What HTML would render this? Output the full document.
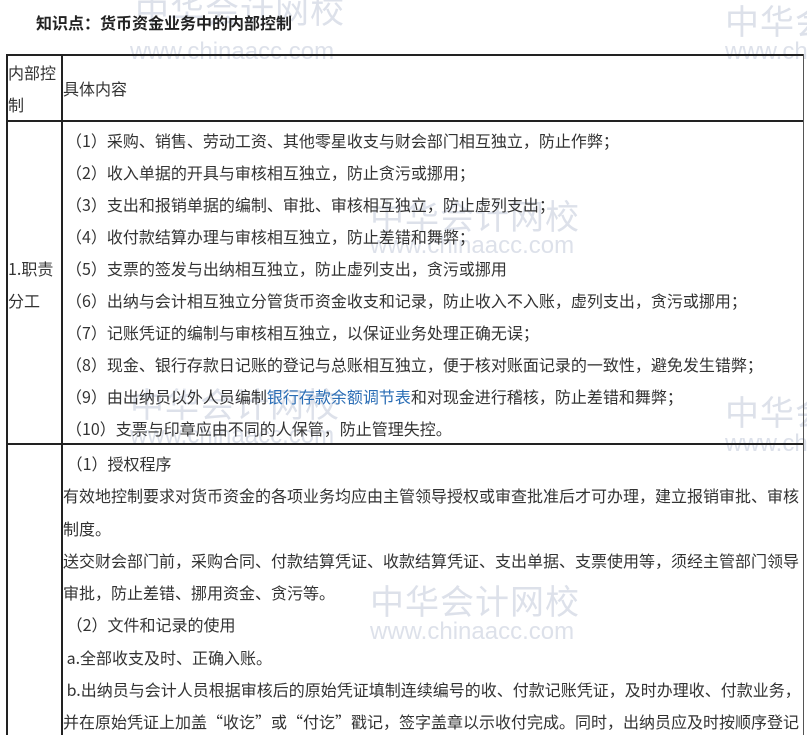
<!DOCTYPE html>
<html><head><meta charset="utf-8"><style>
html,body{margin:0;width:807px;height:735px;overflow:hidden}
body{background:#fff;font-family:"Noto Sans CJK SC","Liberation Sans",sans-serif;color:#333;position:relative}
.t{position:absolute;left:36px;top:10px;font-size:16px;font-weight:bold;color:#222;z-index:3}
.wm{position:absolute;color:#dde1ea;font-size:34px;line-height:34px;white-space:nowrap;letter-spacing:1px;z-index:0;font-family:"Noto Sans CJK SC",sans-serif}
.ww{position:absolute;color:#dde1ea;font-size:24px;line-height:24px;white-space:nowrap;z-index:0;font-family:"Liberation Sans",sans-serif}
.ln{position:absolute;background:#222}
.tx{position:absolute;font-size:16px;line-height:32px;white-space:nowrap;z-index:2}
a{color:#2a6db5;text-decoration:none}
</style></head><body>
<div class="wm" style="left:135px;top:-8px">中华会计网校</div><div class="ww" style="left:130px;top:40px">www.chinaacc.com</div>
<div class="wm" style="left:725px;top:3px">中华会计</div><div class="ww" style="left:725px;top:40px">www.chinaacc.com</div>
<div class="wm" style="left:370px;top:198px">中华会计网校</div><div class="ww" style="left:370px;top:234px">www.chinaacc.com</div>
<div class="wm" style="left:130px;top:386px">中华会计网校</div><div class="ww" style="left:130px;top:424px">www.chinaacc.com</div>
<div class="wm" style="left:725px;top:394px">中华会计</div><div class="ww" style="left:725px;top:432px">www.chinaacc.com</div>
<div class="wm" style="left:370px;top:583px">中华会计网校</div><div class="ww" style="left:370px;top:620px">www.chinaacc.com</div>
<div class="t">知识点：货币资金业务中的内部控制</div>
<div class="ln" style="left:6px;top:54px;width:798px;height:2px"></div>
<div class="ln" style="left:6px;top:120px;width:798px;height:2px"></div>
<div class="ln" style="left:6px;top:443px;width:798px;height:2px"></div>
<div class="ln" style="left:6px;top:54px;width:2px;height:681px"></div>
<div class="ln" style="left:61px;top:54px;width:2px;height:681px"></div>
<div class="ln" style="left:803px;top:54px;width:1px;height:681px;background:#555"></div>
<div class="tx" style="left:8px;top:56px">内部控</div>
<div class="tx" style="left:8px;top:88px">制</div>
<div class="tx" style="left:63px;top:72px">具体内容</div>
<div class="tx" style="left:8px;top:252px">1.职责</div>
<div class="tx" style="left:8px;top:284px">分工</div>
<div class="tx" style="left:66px;top:124px">（1）采购、销售、劳动工资、其他零星收支与财会部门相互独立，防止作弊；<br>（2）收入单据的开具与审核相互独立，防止贪污或挪用；<br>（3）支出和报销单据的编制、审批、审核相互独立，防止虚列支出；<br>（4）收付款结算办理与审核相互独立，防止差错和舞弊；<br>（5）支票的签发与出纳相互独立，防止虚列支出，贪污或挪用<br>（6）出纳与会计相互独立分管货币资金收支和记录，防止收入不入账，虚列支出，贪污或挪用；<br>（7）记账凭证的编制与审核相互独立，以保证业务处理正确无误；<br>（8）现金、银行存款日记账的登记与总账相互独立，便于核对账面记录的一致性，避免发生错弊；<br>（9）由出纳员以外人员编制<a>银行存款余额调节表</a>和对现金进行稽核，防止差错和舞弊；<br>（10）支票与印章应由不同的人保管，防止管理失控。</div>
<div class="tx" style="left:63px;top:447px;line-height:32.3px">&nbsp;（1）授权程序<br>有效地控制要求对货币资金的各项业务均应由主管领导授权或审查批准后才可办理，建立报销审批、审核<br>制度。<br>送交财会部门前，采购合同、付款结算凭证、收款结算凭证、支出单据、支票使用等，须经主管部门领导<br>审批，防止差错、挪用资金、贪污等。<br>&nbsp;（2）文件和记录的使用<br>&nbsp;a.全部收支及时、正确入账。<br>&nbsp;b.出纳员与会计人员根据审核后的原始凭证填制连续编号的收、付款记账凭证，及时办理收、付款业务，<br>并在原始凭证上加盖“收讫”或“付讫”戳记，签字盖章以示收付完成。同时，出纳员应及时按顺序登记</div>
</body></html>
